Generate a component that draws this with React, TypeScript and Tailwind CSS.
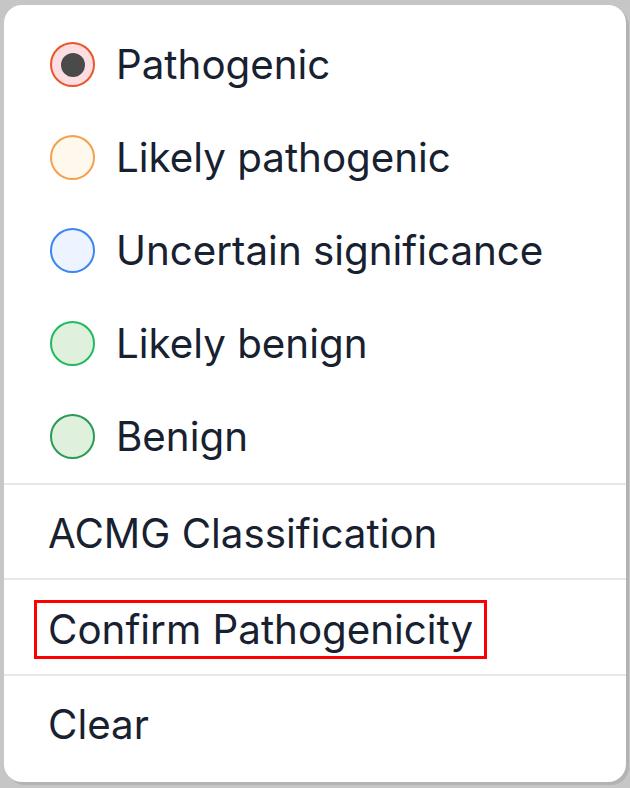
import React from 'react';

interface Option {
  label: string;
  ring: string;
  fill: string;
  selected?: boolean;
}

const options: Option[] = [
  { label: 'Pathogenic', ring: 'border-[#ea5628]', fill: 'bg-[#fbdde2]', selected: true },
  { label: 'Likely pathogenic', ring: 'border-[#f4a04f]', fill: 'bg-[#fff8ec]' },
  { label: 'Uncertain significance', ring: 'border-[#3b86f2]', fill: 'bg-[#eef4ff]' },
  { label: 'Likely benign', ring: 'border-[#1fbb5c]', fill: 'bg-[#dff1dd]' },
  { label: 'Benign', ring: 'border-[#2a9a55]', fill: 'bg-[#dff0dc]' },
];

function Divider() {
  return <div className="h-[2px] bg-[#e4e7ec]" />;
}

export default function App() {
  return (
    <div className="w-[630px] h-[788px] bg-[#c6c6c6] pl-[4px] pt-[5px] overflow-hidden" style={{ fontFamily: 'Inter, "Noto Sans", sans-serif' }}>
      <div className="w-[622px] h-[777px] bg-white rounded-[18px] shadow-[3px_3px_0_#b3b3b3] pt-[13px] text-[40.3px] text-[#172130]">
        {options.map((o) => (
          <div key={o.label} className="h-[93px] flex items-center pl-[46px] gap-[21px]">
            <div className={`w-[45px] h-[45px] rounded-full border-[2.5px] ${o.ring} ${o.fill} flex items-center justify-center shrink-0`}>
              {o.selected && <div className="w-[24px] h-[24px] rounded-full bg-[#4a4a4a]" />}
            </div>
            <span className="leading-none pt-[2px]">{o.label}</span>
          </div>
        ))}
        <Divider />
        <div className="h-[93px] flex items-center pl-[44px] pt-[5px]">
          <span className="leading-none">ACMG Classification</span>
        </div>
        <Divider />
        <div className="h-[94px] flex items-center pl-[30px] pt-[4px]">
          <span className="border-[3px] border-[#ff0000] h-[59px] flex items-center pl-[11px] pr-[11px] pt-[2px] leading-none">Confirm Pathogenicity</span>
        </div>
        <Divider />
        <div className="h-[93px] flex items-center pl-[44px] pt-[5px]">
          <span className="leading-none">Clear</span>
        </div>
      </div>
    </div>
  );
}
